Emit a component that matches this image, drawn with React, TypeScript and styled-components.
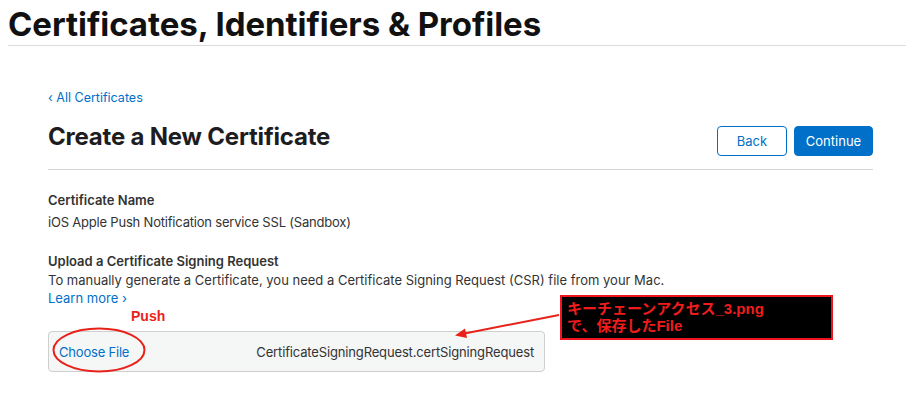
import styled, { createGlobalStyle } from "styled-components";

const GlobalStyle = createGlobalStyle`
  html, body {
    margin: 0;
    padding: 0;
    background: #ffffff;
  }
  body {
    font-family: Inter, "Liberation Sans", "Noto Sans CJK JP", sans-serif;
    color: #333333;
    -webkit-font-smoothing: antialiased;
  }
`;

export default function App() {
  return (
    <Page>
      <GlobalStyle />
      <TopHeader>
        <PageTitle>Certificates, Identifiers &amp; Profiles</PageTitle>
      </TopHeader>
      <Main>
        <BackLink href="#">‹ All Certificates</BackLink>
        <TitleRow>
          <Heading>Create a New Certificate</Heading>
          <Actions>
            <OutlineButton type="button">Back</OutlineButton>
            <FilledButton type="button">Continue</FilledButton>
          </Actions>
        </TitleRow>
        <Section $gap={21}>
          <Label>Certificate Name</Label>
          <Value>iOS Apple Push Notification service SSL (Sandbox)</Value>
        </Section>
        <Section $gap={20}>
          <Label>Upload a Certificate Signing Request</Label>
          <Description>
            To manually generate a Certificate, you need a Certificate Signing
            Request (CSR) file from your Mac.
          </Description>
          <LearnMore href="#">Learn more ›</LearnMore>
        </Section>
        <FileBox>
          <ChooseFile>Choose File</ChooseFile>
          <FileName>CertificateSigningRequest.certSigningRequest</FileName>
        </FileBox>
      </Main>

      {/* annotations drawn on top of the screenshot */}
      <PushNote>Push</PushNote>
      <CircleMark viewBox="0 0 96 48">
        <ellipse cx="48" cy="24" rx="45.5" ry="21.5" fill="none" stroke="#e8221b" strokeWidth="2" />
      </CircleMark>
      <ArrowMark viewBox="0 0 110 30">
        <line x1="107" y1="3" x2="10" y2="22" stroke="#e8221b" strokeWidth="2" />
        <polygon points="3,23.5 13,16.5 15,26" fill="#e8221b" />
      </ArrowMark>
      <NoteBox>
        キーチェーンアクセス_3.png
        <br />
        で、保存したFile
      </NoteBox>
    </Page>
  );
}

const Page = styled.div`
  position: relative;
  width: 906px;
  height: 410px;
  overflow: hidden;
`;

const TopHeader = styled.header`
  box-sizing: border-box;
  margin-left: 8px;
  padding-top: 7px;
  height: 46px;
  border-bottom: 1px solid #dcdcdc;
`;

const PageTitle = styled.h1`
  margin: 0;
  font-size: 33px;
  line-height: 34px;
  font-weight: 700;
  letter-spacing: -0.05px;
  color: #111111;
`;

const Main = styled.main`
  width: 825px;
  margin-left: 48px;
  padding-top: 44px;
  display: flex;
  flex-direction: column;
`;

const BackLink = styled.a`
  font-size: 12.5px;
  line-height: 16px;
  color: #0070c9;
  text-decoration: none;
`;

const TitleRow = styled.div`
  display: flex;
  align-items: flex-start;
  justify-content: space-between;
  margin-top: 16px;
  padding-bottom: 13px;
  border-bottom: 1px solid #d6d6d6;
`;

const Heading = styled.h2`
  margin: 0;
  font-size: 24px;
  line-height: 30px;
  font-weight: 700;
  letter-spacing: -0.2px;
  color: #1d1d1f;
`;

const Actions = styled.div`
  display: flex;
  gap: 7px;
  margin-top: 4px;
`;

const ButtonBase = styled.button`
  height: 30px;
  border-radius: 4px;
  font-family: inherit;
  font-size: 13px;
  cursor: pointer;
`;

const OutlineButton = styled(ButtonBase)`
  width: 70px;
  background: #ffffff;
  border: 1px solid #0070c9;
  color: #0070c9;
`;

const FilledButton = styled(ButtonBase)`
  width: 79px;
  background: #0070c9;
  border: 1px solid #0070c9;
  color: #ffffff;
`;

const Section = styled.section<{ $gap?: number }>`
  display: flex;
  flex-direction: column;
  margin-top: ${(p) => p.$gap ?? 22}px;
`;

const Label = styled.div`
  font-size: 13px;
  line-height: 19px;
  font-weight: 600;
  color: #333333;
`;

const Value = styled.div`
  margin-top: 3px;
  font-size: 13px;
  line-height: 19px;
  letter-spacing: -0.2px;
  color: #333333;
`;

const Description = styled.div`
  font-size: 13px;
  line-height: 19px;
  color: #333333;
`;

const LearnMore = styled.a`
  font-size: 13px;
  line-height: 17px;
  color: #0070c9;
  text-decoration: none;
  align-self: flex-start;
`;

const FileBox = styled.div`
  box-sizing: border-box;
  width: 497px;
  height: 41px;
  margin-top: 24px;
  padding: 0 10px;
  display: flex;
  align-items: center;
  justify-content: space-between;
  background: #f5f6f6;
  border: 1px solid #cfcfcf;
  border-radius: 4px;
`;

const ChooseFile = styled.span`
  font-size: 13px;
  letter-spacing: -0.2px;
  color: #0070c9;
`;

const FileName = styled.span`
  font-size: 13px;
  letter-spacing: -0.15px;
  color: #333333;
`;

const PushNote = styled.div`
  position: absolute;
  left: 131px;
  top: 308px;
  font-family: "Liberation Sans", sans-serif;
  font-size: 14px;
  font-weight: 700;
  color: #e8221b;
`;

const CircleMark = styled.svg`
  position: absolute;
  left: 51px;
  top: 326px;
  width: 96px;
  height: 48px;
`;

const ArrowMark = styled.svg`
  position: absolute;
  left: 452px;
  top: 312px;
  width: 110px;
  height: 30px;
`;

const NoteBox = styled.div`
  position: absolute;
  left: 560px;
  top: 295px;
  box-sizing: border-box;
  width: 273px;
  height: 45px;
  padding: 3px 0 0 5px;
  background: #000000;
  border: 2px solid #f0141e;
  font-family: "Liberation Sans", "Noto Sans CJK JP", sans-serif;
  font-size: 15px;
  line-height: 17px;
  font-weight: 700;
  color: #ee1c1c;
`;
